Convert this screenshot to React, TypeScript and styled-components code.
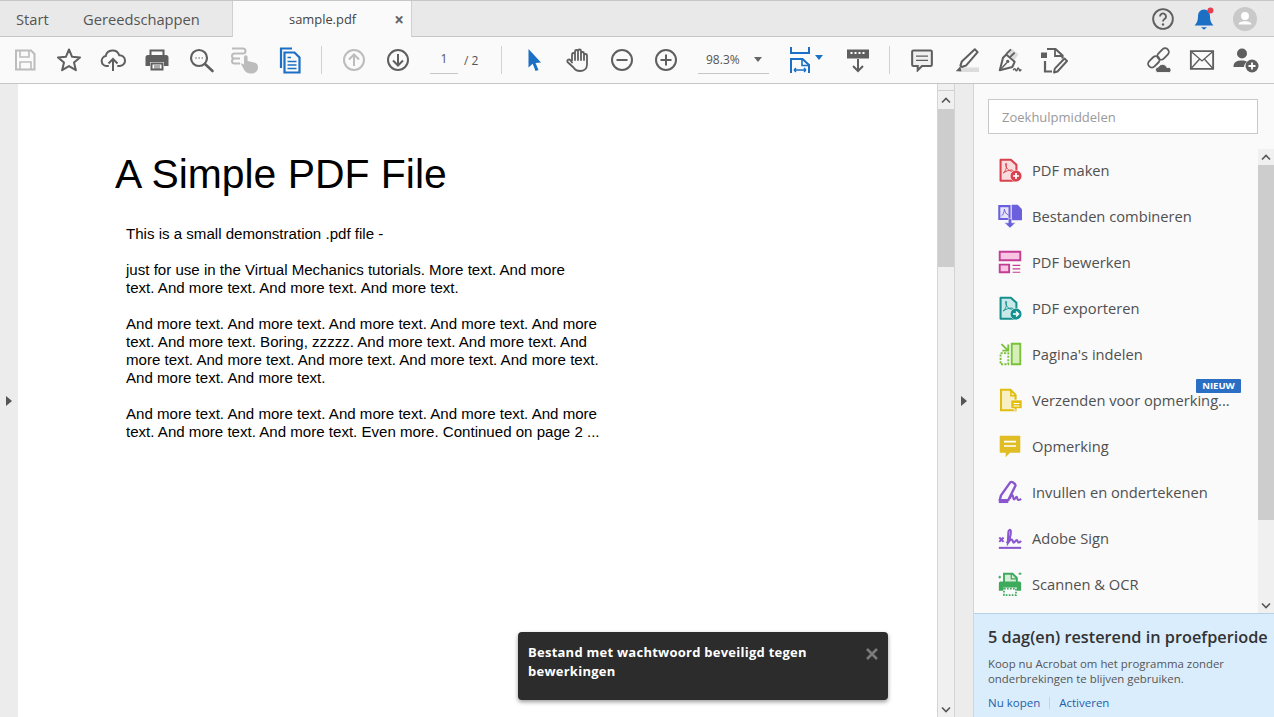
import React from 'react';
import styled, { createGlobalStyle } from 'styled-components';

const GlobalStyle = createGlobalStyle`
  html, body {
    margin: 0;
    padding: 0;
    height: 100%;
    overflow: hidden;
    background: #fff;
  }
  #root {
    height: 100%;
  }
`;

const UI_FONT = `"Open Sans", "Noto Sans", sans-serif`;
const GRAY = '#5f5f5f';
const LIGHT = '#bcbcbc';
const BLUE = '#1b6fc4';

type IconProps = { color?: string };

const Svg: React.FC<{ size?: number; children: React.ReactNode }> = ({ size = 28, children }) => (
  <svg width={size} height={size} viewBox="0 0 28 28" fill="none">
    {children}
  </svg>
);

const SaveIcon = () => (
  <Svg>
    <path d="M5 4.500h15l3.500 3.500v15.500h-18.500z" stroke={LIGHT} strokeWidth="2" />
    <path d="M9 5v6h9V5M9 23v-7h11v7" stroke={LIGHT} strokeWidth="1.600" />
  </Svg>
);
const StarIcon = () => (
  <Svg>
    <path d="M14 3.500l3.100 7.300 7.900.6-6 5.100 1.900 7.700-6.900-4.100-6.900 4.100 1.900-7.700-6-5.100 7.900-.6z" stroke={GRAY} strokeWidth="2" strokeLinejoin="round" />
  </Svg>
);
const CloudUpIcon = () => (
  <Svg>
    <path d="M9 20H7.500a5 5 0 0 1-.8-9.900 7 7 0 0 1 13.500-.9 5.400 5.400 0 0 1 .8 10.800H19" stroke={GRAY} strokeWidth="2" strokeLinecap="round" />
    <path d="M14 25V13M9.500 17.500L14 13l4.500 4.500" stroke={GRAY} strokeWidth="2" />
  </Svg>
);
const PrintIcon = () => (
  <Svg>
    <path d="M7.500 9V4.500h13V9" stroke={GRAY} strokeWidth="2" />
    <path d="M5 9h18a2.500 2.500 0 0 1 2.500 2.500V20H21v-4H7v4H2.500v-8.500A2.500 2.500 0 0 1 5 9z" fill={GRAY} />
    <path d="M8.500 17.500h11v6h-11z" stroke={GRAY} strokeWidth="2" />
    <path d="M11 20h6M11 22h6" stroke={GRAY} strokeWidth="1" />
  </Svg>
);
const FindIcon = () => (
  <Svg>
    <circle cx="12" cy="12" r="8" stroke={GRAY} strokeWidth="2.200" />
    <path d="M18 18l7.500 7" stroke={GRAY} strokeWidth="2.600" strokeLinecap="round" />
    <path d="M8.500 12h1M11.600 12h1M14.700 12h1" stroke={GRAY} strokeWidth="1.600" />
  </Svg>
);
const ReadIcon = () => (
  <Svg>
    <path d="M1 2.500h11a2.500 2.500 0 0 1 0 5H3.500a2.500 2.500 0 0 0 0 5H9M3.500 12.500a2.500 2.500 0 0 0 0 5H9" stroke={LIGHT} strokeWidth="2" />
    <path d="M9.500 17l3.500 1.500V11a1.800 1.800 0 0 1 3.600 0v4l6.400 1.500c2.500.6 4 2 4 4.500 0 4.500-3 6.500-7 6.500-3 0-5-1-6.500-3z" fill={LIGHT} />
  </Svg>
);
const DocsIcon = () => (
  <Svg>
    <path d="M6 22V2.500h11" stroke={BLUE} strokeWidth="2.200" fill="none" />
    <path d="M9.500 6.500h10l5 5v15h-15z" stroke={BLUE} strokeWidth="2.200" />
    <path d="M12.500 15.500h9M12.500 19h9M12.500 22.500h9M12.500 11.500h3.500" stroke={BLUE} strokeWidth="1.500" />
  </Svg>
);
const ArrowCircle: React.FC<IconProps & { up?: boolean }> = ({ color = GRAY, up }) => (
  <Svg>
    <circle cx="14" cy="14" r="10" stroke={color} strokeWidth="2" />
    <path
      d={up ? 'M14 20V8.500M9 13.500l5-5 5 5' : 'M14 8v11.500M9 14.500l5 5 5-5'}
      stroke={color}
      strokeWidth="2"
    />
  </Svg>
);
const CursorIcon = () => (
  <Svg>
    <path d="M8.500 3l12.500 13.500-5.500.5 3 7-3 1-2.800-7.200-4.200 3.700z" fill={BLUE} />
  </Svg>
);
const HandIcon = () => (
  <Svg>
    <path
      d="M8 14.500V8.500a1.500 1.500 0 0 1 3 0V5.500a1.500 1.500 0 0 1 3 0V5a1.500 1.500 0 0 1 3 0v2.500a1.500 1.500 0 0 1 3 0v2a1.500 1.500 0 0 1 3 0v9c0 4-3 6.500-7 6.500-3 0-5-1-6.500-3.500L3.500 16a1.700 1.700 0 0 1 2.700-2l1.800 2.500M11 8.500V14M14 5.500V14M17 7.500V14M20 9.500V14"
      stroke={GRAY}
      strokeWidth="1.800"
      strokeLinecap="round"
      strokeLinejoin="round"
    />
  </Svg>
);
const ZoomCircle: React.FC<{ plus?: boolean }> = ({ plus }) => (
  <Svg>
    <circle cx="14" cy="14" r="10" stroke={GRAY} strokeWidth="2" />
    <path d={plus ? 'M8.500 14h11M14 8.500v11' : 'M8.500 14h11'} stroke={GRAY} strokeWidth="2" />
  </Svg>
);
const FitWidthIcon = () => (
  <Svg>
    <path d="M5 1v6h18V1" stroke={BLUE} strokeWidth="2" />
    <path d="M5 27V13h11.500l6.500 6v8" stroke={BLUE} strokeWidth="2" />
    <path d="M16 13v6.500H23" stroke={BLUE} strokeWidth="1.600" />
    <path d="M8 24h12M8 24l2-2M8 24l2 2M20 24l-2-2M20 24l-2 2" stroke={BLUE} strokeWidth="1.400" />
  </Svg>
);
const KeyDownIcon = () => (
  <Svg>
    <path d="M3 3.500h22v9H3z" fill={GRAY} />
    <path d="M6.500 7h2M10.500 7h2M14.500 7h2M18.500 7h2" stroke="#fff" strokeWidth="1.800" />
    <path d="M14 13v12M9 20l5 5 5-5" stroke={GRAY} strokeWidth="2" />
  </Svg>
);
const CommentIcon = () => (
  <Svg size={24}>
    <path d="M4 3h20a1.500 1.500 0 0 1 1.500 1.500v15A1.500 1.500 0 0 1 24 21H14l-5 5v-5H4a1.500 1.500 0 0 1-1.500-1.500v-15A1.500 1.500 0 0 1 4 3z" fill="#f0f0f0" stroke={GRAY} strokeWidth="2.400" />
    <path d="M7 9.500h14M7 14.500h14" stroke={GRAY} strokeWidth="1.600" />
  </Svg>
);
const MarkerIcon = () => (
  <Svg size={26}>
    <path d="M6 27h22v-5H10z" fill="#dcdcdc" />
    <path d="M23.500 2.500l3 3-12.500 14.500-4.500 1.500-1.500-1.500 1.500-4.500z" stroke={GRAY} strokeWidth="2.200" strokeLinejoin="round" />
    <path d="M8 20.500L3 26h6z" fill={GRAY} />
  </Svg>
);
const PenIcon = () => (
  <Svg size={26}>
    <path d="M10 8l9 8-2.500 5.500L3 25l3.500-13.500z" stroke={GRAY} strokeWidth="2.200" strokeLinejoin="round" />
    <path d="M3.500 24.500l7-7.500" stroke={GRAY} strokeWidth="1.600" />
    <circle cx="11.500" cy="15.500" r="1.800" fill={GRAY} />
    <path d="M11 6l5-4 7 6-4 6z" fill="#dcdcdc" />
    <path d="M10 7.500l5-5M14 11l5-5" stroke={GRAY} strokeWidth="2" />
    <path d="M17.500 25c1-2 2-2 2.500-.5s1.500 1.500 2-.5 1.500-1.500 2 .5 1.500 1 2-.5" stroke={GRAY} strokeWidth="1.600" />
  </Svg>
);
const DocEditIcon = () => (
  <Svg>
    <path d="M1 6.500h6V12H1z" fill={GRAY} />
    <path d="M7 3h8.500l7 6.500v3M5 15v10.500h7" stroke={GRAY} strokeWidth="2.200" />
    <path d="M15 3v7h7" stroke={GRAY} strokeWidth="1.800" />
    <path d="M24.500 12.500l2.500 2.500-9.500 10.500-3.500 1 .8-3.800z" stroke={GRAY} strokeWidth="1.900" strokeLinejoin="round" />
  </Svg>
);
const LinkCloudIcon = () => (
  <Svg size={26}>
    <rect x="12.500" y="3.500" width="14" height="8" rx="4" transform="rotate(-45 19.500 7.500)" stroke={GRAY} strokeWidth="2" />
    <rect x="2.500" y="12" width="14" height="8" rx="4" transform="rotate(-45 9.500 16)" stroke={GRAY} strokeWidth="2" />
    <path d="M13.500 27.500a3 3 0 0 1 .8-5.900 5 5 0 0 1 9.400.6 2.700 2.700 0 0 1 2.800 5.300z" fill={GRAY} stroke="#fafafa" strokeWidth="1" />
  </Svg>
);
const MailIcon = () => (
  <Svg size={26}>
    <path d="M2 4.500h24v19H2z" stroke={GRAY} strokeWidth="2" />
    <path d="M2 4.500L14 15 26 4.500M2 23.500L11.500 13M26 23.500L16.500 13" stroke={GRAY} strokeWidth="1.500" />
  </Svg>
);
const AddUserIcon = () => (
  <Svg>
    <circle cx="10" cy="7.500" r="5" fill={GRAY} />
    <path d="M1.500 21c0-5 3-6.500 8.500-6.500 2.500 0 4 .5 5 1.500-2 1-3 3-3 5z" fill={GRAY} />
    <circle cx="20" cy="20" r="6.500" fill={GRAY} />
    <path d="M16.500 20h7M20 16.500v7" stroke="#fff" strokeWidth="1.800" />
  </Svg>
);
const HelpIcon = () => (
  <Svg size={24}>
    <circle cx="14" cy="14" r="11.500" stroke={GRAY} strokeWidth="2.200" />
    <path d="M10.500 11a3.500 3.500 0 1 1 5.300 3c-1.200.7-1.800 1.300-1.800 2.800" stroke={GRAY} strokeWidth="2.200" />
    <circle cx="14" cy="20.500" r="1.400" fill={GRAY} />
  </Svg>
);
const BellIcon = () => (
  <Svg size={24}>
    <path d="M14 3c-4.500 0-7 3.500-7 8 0 5-1.500 8-4 10.500h22c-2.500-2.500-4-5.500-4-10.500 0-4.500-2.500-8-7-8z" fill={BLUE} />
    <path d="M10.500 23.500h7l-3.500 3z" fill={BLUE} />
    <circle cx="21.500" cy="4" r="3.500" fill="#e5404f" />
  </Svg>
);
const AvatarIcon = () => (
  <Svg size={24}>
    <circle cx="14" cy="14" r="14" fill="#c9c9c9" />
    <circle cx="14" cy="10.500" r="4.600" fill="#fff" />
    <path d="M6.500 20.500c0-3 3.500-4 7.500-4s7.500 1 7.500 4z" fill="#fff" />
  </Svg>
);

const PdfGlyph: React.FC<{ color: string }> = ({ color }) => (
  <path d="M6 17.500c2-1 4.500-6 4-10.500-.2-1.500-1.500-1-1.300.8.4 3.500 4 7.700 7.300 7.700 1.800 0 1.800-1.500 0-1.500-3 0-7.500 1.500-10 3.500z" stroke={color} strokeWidth="1.100" fill="none" />
);

const MakeIcon = () => (
  <Svg size={24}>
    <path d="M3 2h12l6.500 6v18.500H3z" fill="#fbdcdc" stroke="#d9414e" strokeWidth="2.400" strokeLinejoin="round" />
    <PdfGlyph color="#d9414e" />
    <circle cx="21" cy="21" r="6.800" fill="#d9414e" stroke="#fafafa" strokeWidth=".6" />
    <path d="M17.500 21h7M21 17.500v7" stroke="#fff" strokeWidth="2" />
  </Svg>
);
const CombineIcon = () => (
  <Svg size={24}>
    <path d="M1.500 2.500h12v15h-12z" fill="#e6e3fb" stroke="#6a5fdc" strokeWidth="2.400" />
    <path d="M16 1h7l5 5v13H16z" fill="#6a5fdc" />
    <path d="M12 17h4v5h4.500l-6.500 6-6.500-6H12z" fill="#6a5fdc" stroke="#fafafa" strokeWidth=".6" />
    <path d="M4 14c2-1 3-4 3.500-8 .5 3.500 2 6 5 7" stroke="#6a5fdc" strokeWidth="1.100" />
  </Svg>
);
const EditIcon = () => (
  <Svg size={24}>
    <path d="M2 2h24v10H2z" fill="#f8c5e3" stroke="#c43c93" strokeWidth="2.200" />
    <path d="M2 17h11v9H2z" fill="#f8c5e3" stroke="#c43c93" strokeWidth="2.200" />
    <path d="M17 18h9M17 22h9M17 26h9" stroke="#c43c93" strokeWidth="1.300" />
  </Svg>
);
const ExportIcon = () => (
  <Svg size={24}>
    <path d="M3 2h12l6.500 6v18.500H3z" fill="#c9e9e9" stroke="#14908f" strokeWidth="2.400" strokeLinejoin="round" />
    <PdfGlyph color="#14908f" />
    <circle cx="21" cy="21" r="6.800" fill="#14908f" stroke="#fafafa" strokeWidth=".6" />
    <path d="M17.500 21h6.500M21 18l3 3-3 3" stroke="#fff" strokeWidth="1.700" />
  </Svg>
);
const OrganizeIcon = () => (
  <Svg size={24}>
    <path d="M16 2h10v24H16z" fill="#d6efb9" stroke="#79c13b" strokeWidth="2.200" />
    <path d="M3 13h9v13H3z" stroke="#79c13b" strokeWidth="2.200" strokeDasharray="2.500 1.500" />
    <path d="M12 3v7H5M12 10L4 2.500" stroke="#79c13b" strokeWidth="2.200" />
  </Svg>
);
const SendIcon = () => (
  <Svg size={24}>
    <path d="M3.500 2h11l6 6v18h-17z" fill="#f8f0c4" stroke="#e0bd10" strokeWidth="2.400" />
    <path d="M15 2v7h6" stroke="#e0bd10" strokeWidth="1.800" />
    <path d="M15 14h13v10h-6l-3 3v-3h-4z" fill="#e0bd10" stroke="#fafafa" strokeWidth=".8" />
    <path d="M18 18h7M18 21h7" stroke="#fff" strokeWidth="1.200" />
  </Svg>
);
const CommentColorIcon = () => (
  <Svg size={24}>
    <path d="M3 2h22a1 1 0 0 1 1 1v18a1 1 0 0 1-1 1H14l-5 5v-5H3a1 1 0 0 1-1-1V3a1 1 0 0 1 1-1z" fill="#e0bd24" />
    <path d="M7 9h14M7 14h14" stroke="#fff" strokeWidth="2" />
  </Svg>
);
const FillSignIcon = () => (
  <Svg size={24}>
    <path d="M14.500 2.500c1.500-1 6 1.500 6 4L12 23.500H2L3.500 18z" stroke="#8a56cf" strokeWidth="2.800" strokeLinejoin="round" />
    <path d="M1 25.500h11" stroke="#8a56cf" strokeWidth="2.800" />
    <path d="M14 22c1-4 3-6 3.500-3s1 5 2.500 2.500 2-2.500 2.500 0 2 2.500 4.500 .5" stroke="#8a56cf" strokeWidth="2.400" />
  </Svg>
);
const SignIcon = () => (
  <Svg size={24}>
    <path d="M1.500 13.500l5 5M6.500 13.500l-5 5" stroke="#8a56cf" strokeWidth="2.400" />
    <path d="M10 20c3-3 5-8 5-13 0-4-3-3-3 1 0 4-.5 8-.5 12 2-3 4.500-6 5.500-3s1.500 3 3 1 2.500-2 3 0 2 1.500 4-.5" stroke="#8a56cf" strokeWidth="2.400" />
    <path d="M1 25.500h26" stroke="#8a56cf" strokeWidth="2.400" />
  </Svg>
);
const ScanIcon = () => (
  <Svg size={24}>
    <path d="M7 12V2h10l5 5v5" fill="#d5edd9" stroke="#3eaa5c" strokeWidth="2.200" />
    <path d="M15.500 2v6h6" stroke="#3eaa5c" strokeWidth="1.500" />
    <path d="M3 11h22a2 2 0 0 1 2 2v9h-5v-4H6v4H1v-9a2 2 0 0 1 2-2z" fill="#3eaa5c" />
    <path d="M7 19.500h14v7.500H7z" stroke="#3eaa5c" strokeWidth="2" strokeDasharray="2 1.500" />
    <path d="M.5 6h3M2 4.500v3M24 2h3.500M25.700.5v3" stroke="#3eaa5c" strokeWidth="1.300" />
  </Svg>
);

const ToastCloseIcon = () => (
  <svg width="12" height="12" viewBox="0 0 12 12" fill="none">
    <path d="M1 1l10 10M11 1L1 11" stroke="#7a7a7a" strokeWidth="2.600" />
  </svg>
);

const Chevron: React.FC<{ down?: boolean }> = ({ down }) => (
  <svg width="10" height="7" viewBox="0 0 10 7" fill="none">
    <path d={down ? 'M1 1.500l4 4 4-4' : 'M1 5.500l4-4 4 4'} stroke="#555" strokeWidth="1.600" />
  </svg>
);

const tools = [
  { label: 'PDF maken', icon: <MakeIcon /> },
  { label: 'Bestanden combineren', icon: <CombineIcon /> },
  { label: 'PDF bewerken', icon: <EditIcon /> },
  { label: 'PDF exporteren', icon: <ExportIcon /> },
  { label: "Pagina's indelen", icon: <OrganizeIcon /> },
  { label: 'Verzenden voor opmerking...', icon: <SendIcon />, isNew: true },
  { label: 'Opmerking', icon: <CommentColorIcon /> },
  { label: 'Invullen en ondertekenen', icon: <FillSignIcon /> },
  { label: 'Adobe Sign', icon: <SignIcon /> },
  { label: 'Scannen & OCR', icon: <ScanIcon /> },
];

const App: React.FC = () => {
  return (
    <Screen>
      <GlobalStyle />
      <TabBar>
        <Tab>Start</Tab>
        <Tab $wide>Gereedschappen</Tab>
        <ActiveTab>
          <TabTitle>sample.pdf</TabTitle>
          <TabClose>×</TabClose>
        </ActiveTab>
        <TabActions>
          <HelpIcon />
          <BellIcon />
          <AvatarIcon />
        </TabActions>
      </TabBar>

      <Toolbar>
        <Slot><SaveIcon /></Slot>
        <Slot><StarIcon /></Slot>
        <Slot><CloudUpIcon /></Slot>
        <Slot><PrintIcon /></Slot>
        <Slot><FindIcon /></Slot>
        <Slot><ReadIcon /></Slot>
        <Slot><DocsIcon /></Slot>
        <Separator />
        <Slot><ArrowCircle up color={LIGHT} /></Slot>
        <Slot><ArrowCircle /></Slot>
        <PageInput>1</PageInput>
        <PageTotal>/ 2</PageTotal>
        <Separator />
        <Slot><CursorIcon /></Slot>
        <Slot><HandIcon /></Slot>
        <Slot><ZoomCircle /></Slot>
        <Slot><ZoomCircle plus /></Slot>
        <ZoomBox>
          98.3%
          <Caret />
        </ZoomBox>
        <FitSlot>
          <FitWidthIcon />
          <BlueCaret />
        </FitSlot>
        <Slot><KeyDownIcon /></Slot>
        <Separator $tight />
        <Slot><CommentIcon /></Slot>
        <Slot><MarkerIcon /></Slot>
        <Slot><PenIcon /></Slot>
        <Slot><DocEditIcon /></Slot>
        <Spacer />
        <Slot><LinkCloudIcon /></Slot>
        <Slot><MailIcon /></Slot>
        <Slot><AddUserIcon /></Slot>
      </Toolbar>

      <Main>
        <Gutter>
          <GutterArrow />
        </Gutter>
        <Page>
          <PageTitle>A Simple PDF File</PageTitle>
          <PageBody>
            <p>This is a small demonstration .pdf file -</p>
            <p>
              just for use in the Virtual Mechanics tutorials. More text. And more
              <br />
              text. And more text. And more text. And more text.
            </p>
            <p>
              And more text. And more text. And more text. And more text. And more
              <br />
              text. And more text. Boring, zzzzz. And more text. And more text. And
              <br />
              more text. And more text. And more text. And more text. And more text.
              <br />
              And more text. And more text.
            </p>
            <p>
              And more text. And more text. And more text. And more text. And more
              <br />
              text. And more text. And more text. Even more. Continued on page 2 ...
            </p>
          </PageBody>
          <Toast>
            <ToastText>Bestand met wachtwoord beveiligd tegen bewerkingen</ToastText>
            <ToastClose><ToastCloseIcon /></ToastClose>
          </Toast>
        </Page>
        <MainScroll>
          <ScrollCap />
          <ScrollButton $main><Chevron /></ScrollButton>
          <MainThumb />
          <ScrollTrack />
          <ScrollButton><Chevron down /></ScrollButton>
        </MainScroll>
        <Gutter>
          <GutterArrow />
        </Gutter>
        <Panel>
          <SearchWrap>
            <SearchBox>Zoekhulpmiddelen</SearchBox>
          </SearchWrap>
          <PanelBody>
            <ToolList>
              {tools.map((tool) => (
                <ToolRow key={tool.label}>
                  {tool.icon}
                  <ToolLabel>{tool.label}</ToolLabel>
                  {tool.isNew && <NewBadge>NIEUW</NewBadge>}
                </ToolRow>
              ))}
            </ToolList>
            <PanelScroll>
              <ScrollButton><Chevron /></ScrollButton>
              <PanelThumb />
              <ScrollTrack />
              <ScrollButton><Chevron down /></ScrollButton>
            </PanelScroll>
          </PanelBody>
          <Promo>
            <PromoTitle>5 dag(en) resterend in proefperiode</PromoTitle>
            <PromoText>
              Koop nu Acrobat om het programma zonder
              <br />
              onderbrekingen te blijven gebruiken.
            </PromoText>
            <PromoLinks>
              <PromoLink>Nu kopen</PromoLink>
              <PromoDivider />
              <PromoLink>Activeren</PromoLink>
            </PromoLinks>
          </Promo>
        </Panel>
      </Main>
    </Screen>
  );
};

export default App;

const Screen = styled.div`
  display: flex;
  flex-direction: column;
  height: 717px;
  width: 1274px;
  overflow: hidden;
  font-family: ${UI_FONT};
`;

const TabBar = styled.div`
  display: flex;
  height: 35px;
  flex-shrink: 0;
  background: #e9e9e9;
  border-top: 1px solid #c6c6c6;
  border-bottom: 1px solid #c6c6c6;
`;

const Tab = styled.div<{ $wide?: boolean }>`
  display: flex;
  align-items: center;
  width: ${(p) => (p.$wide ? '149px' : '83px')};
  padding-left: ${(p) => (p.$wide ? '0' : '16px')};
  box-sizing: border-box;
  font-size: 14.7px;
  color: #555;
`;

const ActiveTab = styled.div`
  display: flex;
  align-items: center;
  width: 180px;
  height: 36px;
  padding: 0 7px 0 56px;
  box-sizing: border-box;
  background: #fafafa;
  border-left: 1px solid #d0d0d0;
  border-right: 1px solid #d0d0d0;
`;

const TabTitle = styled.span`
  flex: 1;
  font-size: 12.9px;
  color: #444;
`;

const TabClose = styled.span`
  font-size: 17px;
  font-weight: 700;
  color: #666;
`;

const TabActions = styled.div`
  margin-left: auto;
  display: flex;
  align-items: center;
  gap: 17px;
  padding-right: 17px;
`;

const Toolbar = styled.div`
  display: flex;
  align-items: center;
  height: 47px;
  flex-shrink: 0;
  padding: 0 6px 0 3px;
  background: #fafafa;
  border-bottom: 1px solid #c6c6c6;
  box-sizing: border-box;
`;

const Slot = styled.div`
  display: flex;
  align-items: center;
  justify-content: center;
  width: 44px;
  height: 100%;
  flex-shrink: 0;
`;

const Separator = styled.div<{ $tight?: boolean }>`
  width: 1px;
  height: 28px;
  margin: 0 10px 0 ${(p) => (p.$tight ? '9px' : '10px')};
  background: #d2d2d2;
  flex-shrink: 0;
`;

const PageInput = styled.div`
  width: 28px;
  height: 28px;
  margin-left: 10px;
  line-height: 26px;
  text-align: center;
  font-size: 12px;
  color: #555;
  border-bottom: 1px solid #c6c6c6;
  box-sizing: border-box;
`;

const PageTotal = styled.div`
  width: 33px;
  padding-left: 6px;
  box-sizing: border-box;
  font-size: 12px;
  color: #555;
`;

const ZoomBox = styled.div`
  display: flex;
  align-items: center;
  justify-content: space-between;
  width: 71px;
  height: 28px;
  margin-left: 10px;
  padding: 0 7px 0 8px;
  box-sizing: border-box;
  font-size: 12px;
  color: #555;
  border-bottom: 1px solid #c6c6c6;
`;

const Caret = styled.span`
  width: 0;
  height: 0;
  border-left: 4px solid transparent;
  border-right: 4px solid transparent;
  border-top: 5px solid #666;
`;

const BlueCaret = styled(Caret)`
  margin-left: 1px;
  margin-bottom: 6px;
  border-top-color: ${BLUE};
`;

const FitSlot = styled.div`
  display: flex;
  align-items: center;
  width: 50px;
  margin-left: 17px;
  flex-shrink: 0;
`;

const Spacer = styled.div`
  flex: 1;
`;

const Main = styled.div`
  display: flex;
  flex: 1;
  min-height: 0;
`;

const Gutter = styled.div`
  display: flex;
  align-items: center;
  justify-content: center;
  width: 18px;
  flex-shrink: 0;
  background: #ececec;
`;

const GutterArrow = styled.span`
  width: 0;
  height: 0;
  border-top: 5px solid transparent;
  border-bottom: 5px solid transparent;
  border-left: 6px solid #555;
`;

const Page = styled.div`
  position: relative;
  flex: 1;
  min-width: 0;
  padding: 67px 0 0 97px;
  box-sizing: border-box;
  background: #fff;
  font-family: "Liberation Sans", Arial, sans-serif;
  color: #000;
`;

const PageTitle = styled.h1`
  margin: 0;
  font-size: 40.9px;
  line-height: 46px;
  font-weight: 400;
`;

const PageBody = styled.div`
  margin: 28px 0 0 11px;
  font-size: 15.08px;
  line-height: 18px;
  white-space: nowrap;

  p {
    margin: 0 0 18px;
  }
`;

const Toast = styled.div`
  position: absolute;
  left: 500px;
  top: 548px;
  display: flex;
  justify-content: space-between;
  width: 370px;
  height: 68px;
  padding: 11px 10px 0 10px;
  box-sizing: border-box;
  border-radius: 4px;
  background: #2c2c2c;
  box-shadow: 0 2px 4px rgba(0, 0, 0, 0.4);
`;

const ToastText = styled.div`
  width: 300px;
  font-family: ${UI_FONT};
  font-size: 13px;
  font-weight: 700;
  line-height: 19px;
  letter-spacing: 0.25px;
  color: #fff;
`;

const ToastClose = styled.span`
  display: flex;
  padding-top: 5px;
`;

const MainScroll = styled.div`
  display: flex;
  flex-direction: column;
  width: 18px;
  flex-shrink: 0;
  background: #f0f0f0;
  border-left: 1px solid #d4d4d4;
  border-right: 1px solid #d4d4d4;
  box-sizing: border-box;
`;

const ScrollCap = styled.div`
  height: 7px;
  flex-shrink: 0;
  border-bottom: 1px solid #cfcfcf;
  box-sizing: border-box;
`;

const ScrollButton = styled.div<{ $main?: boolean }>`
  display: flex;
  align-items: center;
  justify-content: center;
  height: ${(p) => (p.$main ? '18px' : '16px')};
  flex-shrink: 0;
  background: #f0f0f0;
`;

const MainThumb = styled.div`
  height: 158px;
  flex-shrink: 0;
  background: #cdcdcd;
`;

const ScrollTrack = styled.div`
  flex: 1;
`;

const Panel = styled.div`
  display: flex;
  flex-direction: column;
  width: 301px;
  flex-shrink: 0;
  background: #fafafa;
  border-left: 1px solid #d4d4d4;
  box-sizing: border-box;
`;

const SearchWrap = styled.div`
  padding: 15px 16px 13px 14px;
  flex-shrink: 0;
`;

const SearchBox = styled.div`
  height: 35px;
  line-height: 35px;
  padding-left: 13px;
  box-sizing: border-box;
  background: #fff;
  border: 1px solid #c8c8c8;
  font-size: 13px;
  color: #999;
`;

const PanelBody = styled.div`
  display: flex;
  flex: 1;
  min-height: 0;
`;

const ToolList = styled.div`
  flex: 1;
  min-width: 0;
`;

const ToolRow = styled.div`
  position: relative;
  display: flex;
  align-items: center;
  gap: 10px;
  height: 46px;
  padding-left: 24px;
  white-space: nowrap;
`;

const ToolLabel = styled.span`
  font-size: 14.7px;
  color: #505050;
`;

const NewBadge = styled.span`
  position: absolute;
  top: 2px;
  right: 17px;
  width: 45px;
  height: 14px;
  line-height: 14px;
  text-align: center;
  border-radius: 1px;
  background: #2a6fc4;
  color: #fff;
  font-size: 9.5px;
  font-weight: 700;
`;

const PanelScroll = styled.div`
  display: flex;
  flex-direction: column;
  width: 16px;
  flex-shrink: 0;
  margin-top: 2px;
  background: #f0f0f0;
`;

const PanelThumb = styled.div`
  height: 355px;
  flex-shrink: 0;
  background: #cdcdcd;
`;

const Promo = styled.div`
  height: 104px;
  flex-shrink: 0;
  padding: 13px 0 0 14px;
  box-sizing: border-box;
  background: #daedfd;
  border-top: 1px solid #b8d0e4;
  overflow: hidden;
`;

const PromoTitle = styled.div`
  font-size: 16.3px;
  font-weight: 600;
  line-height: 20px;
  color: #333;
  white-space: nowrap;
`;

const PromoText = styled.div`
  margin-top: 9px;
  font-size: 11.4px;
  line-height: 15px;
  color: #555;
`;

const PromoLinks = styled.div`
  display: flex;
  align-items: center;
  margin-top: 9px;
`;

const PromoLink = styled.span`
  font-size: 11.5px;
  color: #1f5fa8;
`;

const PromoDivider = styled.span`
  width: 1px;
  height: 12px;
  margin: 0 9px;
  background: #c4d6e4;
`;
